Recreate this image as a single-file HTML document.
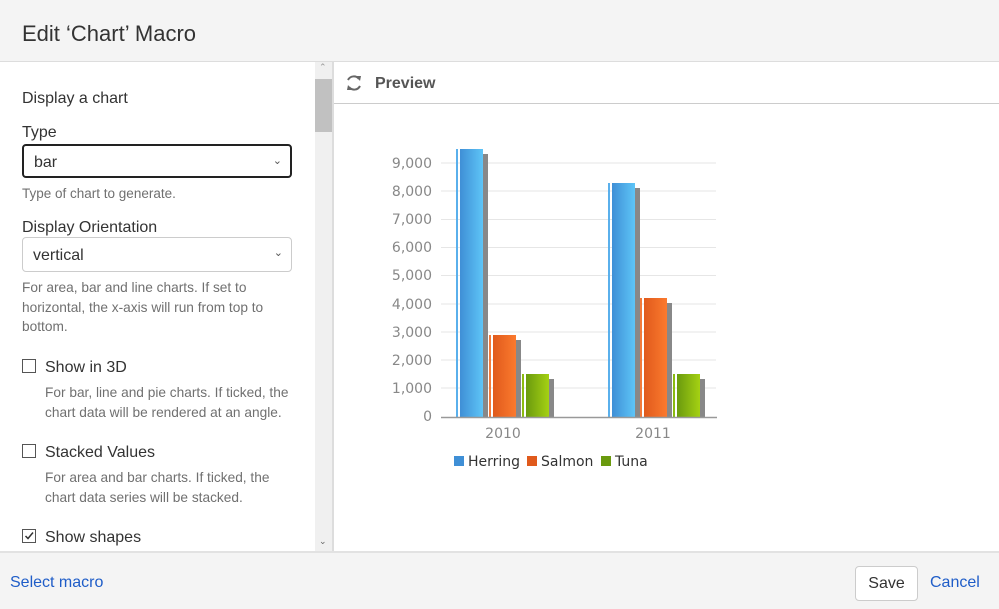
<!DOCTYPE html>
<html><head><meta charset="utf-8"><style>
*{box-sizing:border-box;margin:0;padding:0}
body{width:999px;height:609px;overflow:hidden;font-family:"Liberation Sans",sans-serif;background:#fff;position:relative;color:#333}
.a{position:absolute;white-space:nowrap}
.hdr{position:absolute;left:0;top:0;width:999px;height:62px;background:#f4f4f4;border-bottom:1px solid #ddd}
.ftr{position:absolute;left:0;top:551px;width:999px;height:58px;background:#f4f4f4;border-top:2px solid #e2e2e2}
.lbl{font-size:16px;color:#333}
.desc{font-size:13.7px;color:#707070;line-height:19.5px}
.sel{position:absolute;left:22px;width:270px;height:35px;border:1px solid #ccc;border-radius:4px;font-size:16px;padding:9px 10px;color:#333}
.chev{position:absolute;right:8px;top:8px;font-size:11px;color:#555}
.cb{position:absolute;left:22px;width:14px;height:14px;border:1.5px solid #555}
</style></head><body>
<div class="hdr"></div>
<div class="a" style="left:22px;top:21px;font-size:22px;color:#333">Edit ‘Chart’ Macro</div>

<div class="a lbl" style="left:22px;top:90px">Display a chart</div>
<div class="a lbl" style="left:22px;top:124px">Type</div>
<div class="sel" style="top:144px;height:34px;border:2px solid #222;padding-top:8px">bar<span class="chev">&#8964;</span></div>
<div class="a desc" style="left:22px;top:184px;font-size:13.5px">Type of chart to generate.</div>
<div class="a lbl" style="left:22px;top:219px">Display Orientation</div>
<div class="sel" style="top:237px">vertical<span class="chev">&#8964;</span></div>
<div class="a desc" style="left:22px;top:278px;white-space:normal;width:270px">For area, bar and line charts. If set to horizontal, the x-axis will run from top to bottom.</div>

<div class="cb" style="top:359px"></div>
<div class="a lbl" style="left:45px;top:359px">Show in 3D</div>
<div class="a desc" style="left:45px;top:383px">For bar, line and pie charts. If ticked, the<br>chart data will be rendered at an angle.</div>
<div class="cb" style="top:444px"></div>
<div class="a lbl" style="left:45px;top:444px">Stacked Values</div>
<div class="a desc" style="left:45px;top:468px">For area and bar charts. If ticked, the<br>chart data series will be stacked.</div>
<div class="cb" style="top:529px"></div>
<svg class="a" style="left:22px;top:529px" width="14" height="14"><path d="M3.5 7 L6 9.5 L11 3.5" fill="none" stroke="#333" stroke-width="1.5"/></svg>
<div class="a lbl" style="left:45px;top:529px">Show shapes</div>

<div class="a" style="left:315px;top:62px;width:17px;height:489px;background:#f0f0f0"></div>
<div class="a" style="left:315px;top:79px;width:17px;height:53px;background:#c1c1c1"></div>
<div class="a" style="left:319px;top:62px;font-size:9px;color:#999">&#8963;</div>
<div class="a" style="left:319px;top:536px;font-size:9px;color:#666">&#8964;</div>
<div class="a" style="left:332px;top:62px;width:2px;height:489px;background:#ddd"></div>

<div class="a" style="left:334px;top:103px;width:665px;height:1px;background:#ccc"></div>
<svg class="a" style="left:345px;top:74px" width="18" height="18" viewBox="0 0 18 18"><path d="M14 5 A6.5 6.5 0 0 0 3 6" fill="none" stroke="#666" stroke-width="2"/><path d="M11 2 L16 2 L15 7 Z" fill="#666"/><path d="M4 13 A6.5 6.5 0 0 0 15 12" fill="none" stroke="#666" stroke-width="2"/><path d="M7 16 L2 16 L3 11 Z" fill="#666"/></svg>
<div class="a" style="left:375px;top:75px;font-size:16px;font-weight:bold;color:#555">Preview</div>

<svg class="a" style="left:380px;top:130px" width="350" height="350" font-family="DejaVu Sans,sans-serif">
<defs>
<linearGradient id="b" x1="0" x2="1"><stop offset="0" stop-color="#3f8fd6"/><stop offset="1" stop-color="#5ec5f7"/></linearGradient>
<linearGradient id="o" x1="0" x2="1"><stop offset="0" stop-color="#e05a1c"/><stop offset="1" stop-color="#fb7a2e"/></linearGradient>
<linearGradient id="g" x1="0" x2="1"><stop offset="0" stop-color="#6a9a0e"/><stop offset="1" stop-color="#a5d113"/></linearGradient>
</defs>
<g stroke="#e6e6e6" stroke-width="1">
<line x1="61" x2="336" y1="33" y2="33"/><line x1="61" x2="336" y1="61" y2="61"/><line x1="61" x2="336" y1="89.5" y2="89.5"/><line x1="61" x2="336" y1="117.5" y2="117.5"/><line x1="61" x2="336" y1="145.5" y2="145.5"/><line x1="61" x2="336" y1="174" y2="174"/><line x1="61" x2="336" y1="202" y2="202"/><line x1="61" x2="336" y1="230" y2="230"/><line x1="61" x2="336" y1="258" y2="258"/>
</g>
<g font-size="14" fill="#888" text-anchor="end">
<text x="52" y="38">9,000</text><text x="52" y="66">8,000</text><text x="52" y="94">7,000</text><text x="52" y="122">6,000</text><text x="52" y="150">5,000</text><text x="52" y="179">4,000</text><text x="52" y="207">3,000</text><text x="52" y="235">2,000</text><text x="52" y="263">1,000</text><text x="52" y="291">0</text>
</g>
<g fill="#888">
<rect x="103" y="24" width="5" height="263"/><rect x="136" y="210" width="5" height="77"/><rect x="169" y="249" width="5" height="38"/>
<rect x="255" y="58" width="5" height="229"/><rect x="287" y="173" width="5" height="114"/><rect x="320" y="249" width="5" height="38"/>
</g>
<rect x="76" y="19" width="2" height="268" fill="#5ab0ec"/><rect x="80" y="19" width="23" height="268" fill="url(#b)"/>
<rect x="109" y="205" width="2" height="82" fill="#f27a3a"/><rect x="113" y="205" width="23" height="82" fill="url(#o)"/>
<rect x="142" y="244" width="2" height="43" fill="#8bbb10"/><rect x="146" y="244" width="23" height="43" fill="url(#g)"/>
<rect x="228" y="53" width="2" height="234" fill="#5ab0ec"/><rect x="232" y="53" width="23" height="234" fill="url(#b)"/>
<rect x="260" y="168" width="2" height="119" fill="#f27a3a"/><rect x="264" y="168" width="23" height="119" fill="url(#o)"/>
<rect x="293" y="244" width="2" height="43" fill="#8bbb10"/><rect x="297" y="244" width="23" height="43" fill="url(#g)"/>
<line x1="61" x2="337" y1="287.5" y2="287.5" stroke="#999" stroke-width="1.5"/>
<g font-size="14" fill="#888" text-anchor="middle"><text x="123" y="308">2010</text><text x="273" y="308">2011</text></g>
<g font-size="14" fill="#333">
<rect x="74" y="326" width="10" height="10" fill="#3f8fd6"/><text x="88" y="336">Herring</text>
<rect x="147" y="326" width="10" height="10" fill="#e05a1c"/><text x="161" y="336">Salmon</text>
<rect x="221" y="326" width="10" height="10" fill="#6a9a0e"/><text x="235" y="336">Tuna</text>
</g>
</svg>

<div class="ftr"></div>
<div class="a" style="left:10px;top:574px;font-size:16px;color:#1f5dc8">Select macro</div>
<div class="a" style="left:855px;top:566px;width:63px;height:35px;border:1px solid #ccc;border-radius:4px;background:#fff;font-size:16px;text-align:center;line-height:33px;color:#333">Save</div>
<div class="a" style="left:930px;top:574px;font-size:16px;color:#1f5dc8">Cancel</div>
</body></html>
